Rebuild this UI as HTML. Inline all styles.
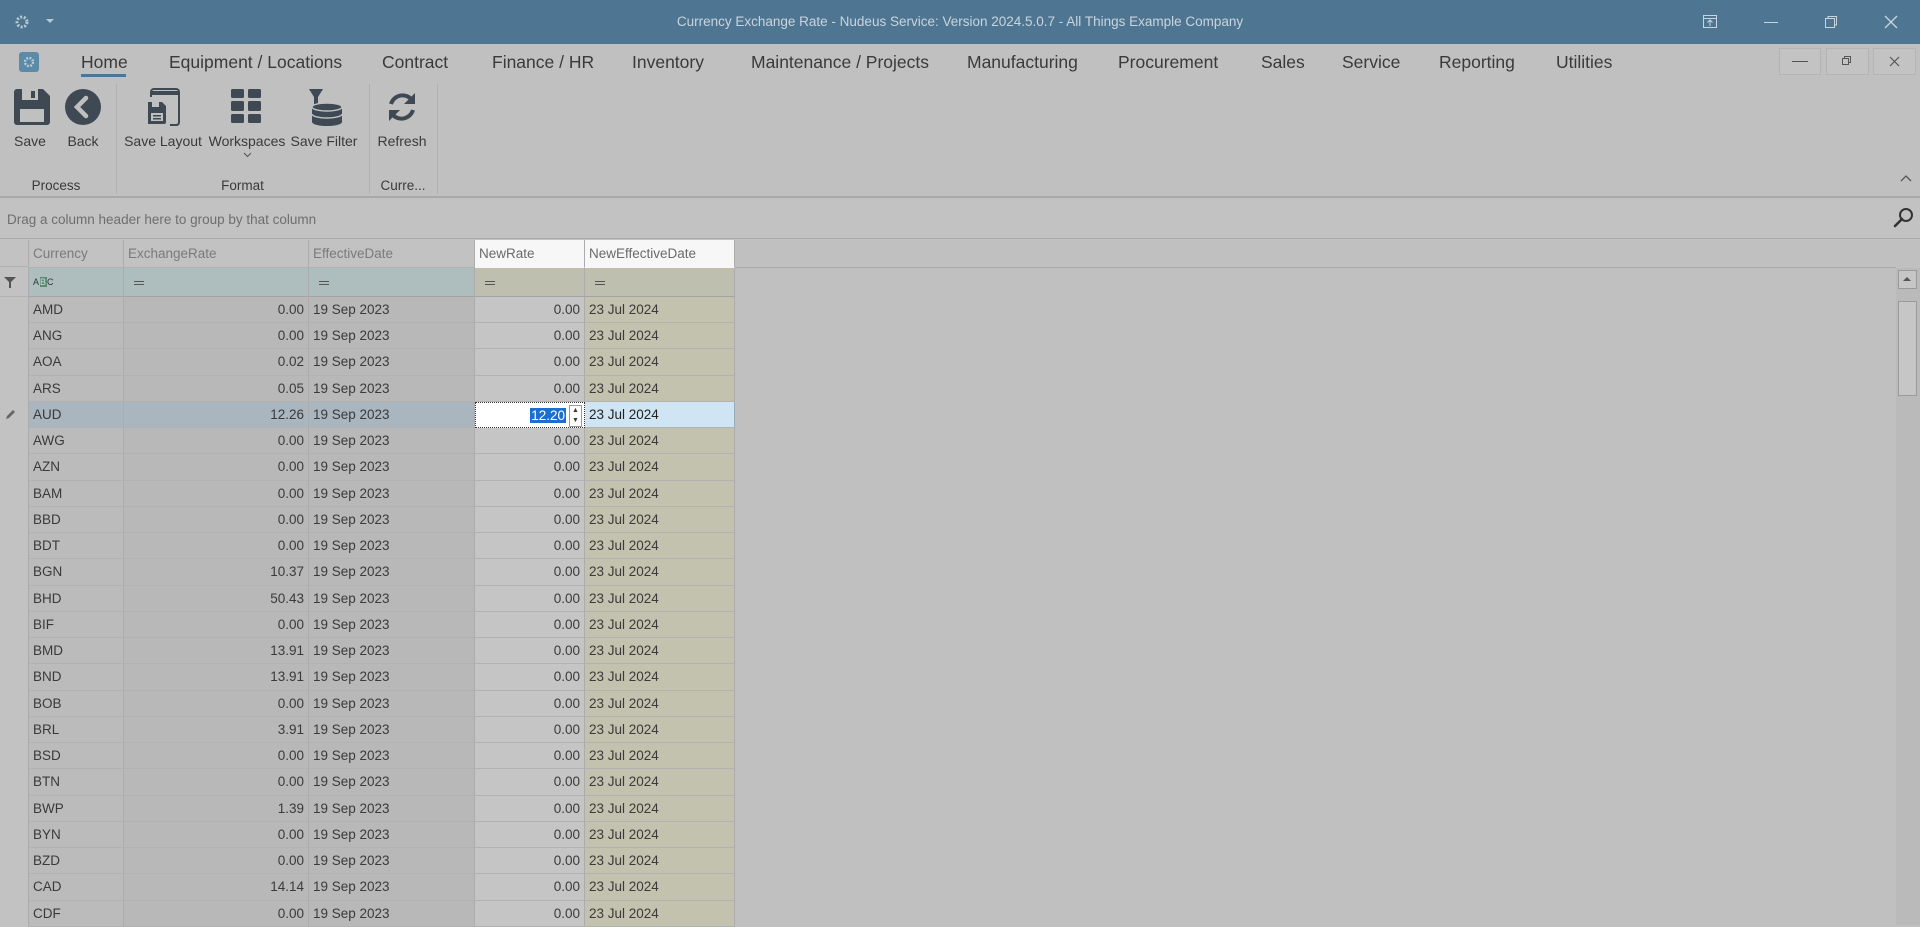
<!DOCTYPE html>
<html><head><meta charset="utf-8"><style>
*{margin:0;padding:0;box-sizing:border-box}
body{width:1920px;height:925px;overflow:hidden;background:#c0c0c0;font-family:"Liberation Sans",sans-serif;position:relative;color:#3a3a3a}
.a{position:absolute}
.title{left:0;top:0;width:1920px;height:44px;background:#4e7591}
.tt{left:0;width:1920px;top:14px;text-align:center;font-size:13.5px;color:#c9d5de}
.tab{top:52px;font-size:17.5px;color:#3a3a3a}
.rl{top:133px;font-size:14px;color:#3a3a3a;text-align:center}
.gl{top:178px;font-size:13.5px;color:#3a3a3a;text-align:center}
.sep{width:1px;background:#b0b0b0;top:84px;height:110px}
.cell{position:absolute;height:26.24px;border-right:1px solid #acacac;border-bottom:1px solid #b2b2b2;font-size:13.5px;line-height:25px;padding:0 4px;white-space:nowrap;overflow:hidden}
.r{text-align:right}
</style></head><body>
<div class="a title"></div>
<svg class="a" style="left:14px;top:14px" width="16" height="16" viewBox="0 0 16 16"><circle cx="8" cy="8" r="5" fill="none" stroke="#b8c8d4" stroke-width="3" stroke-dasharray="2 1.6"/><circle cx="8" cy="8" r="2" fill="#4e7591"/></svg>
<div class="a" style="left:46px;top:19px;border:4px solid transparent;border-top:4px solid #b8c8d4"></div>
<div class="a tt">Currency Exchange Rate - Nudeus Service: Version 2024.5.0.7 - All Things Example Company</div>
<svg class="a" style="left:1702px;top:14px" width="16" height="16"><rect x="1.5" y="1.5" width="13" height="12" fill="none" stroke="#c9d5de"/><line x1="1.5" y1="4.5" x2="14.5" y2="4.5" stroke="#c9d5de"/><path d="M8 12V6M5.5 8.5L8 6l2.5 2.5" fill="none" stroke="#c9d5de"/></svg>
<div class="a" style="left:1764px;top:22px;width:14px;height:1px;background:#c9d5de"></div>
<svg class="a" style="left:1824px;top:15px" width="14" height="14"><rect x="1.5" y="3.5" width="9" height="9" fill="none" stroke="#c9d5de"/><path d="M4 3.5V1.5h8.5V10h-2" fill="none" stroke="#c9d5de"/></svg>
<svg class="a" style="left:1884px;top:15px" width="14" height="14"><path d="M1 1L13 13M13 1L1 13" stroke="#c9d5de" stroke-width="1.3"/></svg>

<div class="a" style="left:19px;top:52px;width:20px;height:20px;background:#5d8aa6;border-radius:3px"></div>
<svg class="a" style="left:22px;top:55px" width="14" height="14"><circle cx="7" cy="7" r="4" fill="none" stroke="#bcd0dc" stroke-width="2.4" stroke-dasharray="1.8 1.4"/></svg>
<div class="a tab" style="left:81px">Home</div>
<div class="a" style="left:81px;top:74px;width:45px;height:3px;background:#4e7591"></div>
<div class="a tab" style="left:169px">Equipment / Locations</div>
<div class="a tab" style="left:382px">Contract</div>
<div class="a tab" style="left:492px">Finance / HR</div>
<div class="a tab" style="left:632px">Inventory</div>
<div class="a tab" style="left:751px">Maintenance / Projects</div>
<div class="a tab" style="left:967px">Manufacturing</div>
<div class="a tab" style="left:1118px">Procurement</div>
<div class="a tab" style="left:1261px">Sales</div>
<div class="a tab" style="left:1342px">Service</div>
<div class="a tab" style="left:1439px">Reporting</div>
<div class="a tab" style="left:1556px">Utilities</div>
<div class="a" style="left:1779px;top:48px;width:42px;height:27px;border:1px solid #b4b4b4;background:#c3c3c3"></div>
<div class="a" style="left:1792px;top:61px;width:16px;height:1px;background:#555"></div>
<div class="a" style="left:1826px;top:48px;width:43px;height:27px;border:1px solid #b4b4b4;background:#c3c3c3"></div>
<svg class="a" style="left:1841px;top:55px" width="12" height="12"><rect x="1.5" y="3.5" width="6" height="6" fill="none" stroke="#555"/><path d="M3.5 3.5V1.5h6v6h-2" fill="none" stroke="#555"/></svg>
<div class="a" style="left:1873px;top:48px;width:43px;height:27px;border:1px solid #b4b4b4;background:#c3c3c3"></div>
<svg class="a" style="left:1889px;top:56px" width="11" height="11"><path d="M1 1L10 10M10 1L1 10" stroke="#555" stroke-width="1.2"/></svg>

<svg class="a" style="left:12px;top:88px" width="40" height="38" viewBox="0 0 40 38"><path d="M2 4a3 3 0 0 1 3-3h26l7 7v26a3 3 0 0 1-3 3H5a3 3 0 0 1-3-3z" fill="#3f4954"/><rect x="10" y="1" width="16" height="11" fill="#c0c0c0"/><rect x="19" y="3" width="4" height="7" fill="#3f4954"/><rect x="8" y="21" width="24" height="13" fill="#c0c0c0"/></svg>
<svg class="a" style="left:64px;top:88px" width="38" height="38"><circle cx="19" cy="19" r="18" fill="#3f4954"/><path d="M22 10l-9 9 9 9" fill="none" stroke="#c0c0c0" stroke-width="4.5" stroke-linecap="round"/></svg>
<svg class="a" style="left:146px;top:88px" width="36" height="38"><path d="M5 9V4a3 3 0 0 1 3-3h22a3 3 0 0 1 3 3v31" fill="none" stroke="#3f4954" stroke-width="2"/><rect x="6" y="3" width="26" height="4" fill="#3f4954"/><path d="M33 35a3 3 0 0 1-3 2h-6" fill="none" stroke="#3f4954" stroke-width="2"/><path d="M2 14h14l4 4v16a2 2 0 0 1-2 2H2z" fill="#3f4954"/><rect x="6" y="14" width="7" height="5" fill="#c0c0c0"/><rect x="5" y="25" width="12" height="8" fill="#c0c0c0"/><rect x="7" y="27" width="8" height="1.5" fill="#3f4954"/><rect x="7" y="30" width="8" height="1.5" fill="#3f4954"/></svg>
<svg class="a" style="left:230px;top:88px" width="34" height="36"><g fill="#3f4954"><rect x="1" y="1" width="13" height="9" rx="1.5"/><rect x="18" y="1" width="13" height="9" rx="1.5"/><rect x="1" y="13" width="13" height="10" rx="1.5"/><rect x="18" y="13" width="13" height="10" rx="1.5"/><rect x="1" y="26" width="13" height="9" rx="1.5"/><rect x="18" y="26" width="13" height="9" rx="1.5"/></g></svg>
<svg class="a" style="left:306px;top:88px" width="38" height="38"><g fill="#3f4954"><path d="M3 1h14l-5 8v12h-4V9z"/><ellipse cx="21" cy="34" rx="15" ry="4"/><rect x="6" y="26" width="30" height="8"/><ellipse cx="21" cy="26" rx="15" ry="4" stroke="#c0c0c0" stroke-width="1.5"/><rect x="6" y="19" width="30" height="7"/><ellipse cx="21" cy="19" rx="15" ry="4" stroke="#c0c0c0" stroke-width="1.5"/></g></svg>
<svg class="a" style="left:384px;top:90px" width="36" height="34"><g fill="none" stroke="#3f4954" stroke-width="4"><path d="M7 14a12 12 0 0 1 21-4"/><path d="M29 20a12 12 0 0 1-21 4"/></g><path d="M31 3v11H20z" fill="#3f4954"/><path d="M5 31V20h11z" fill="#3f4954"/></svg>
<div class="a rl" style="left:0;width:60px">Save</div>
<div class="a rl" style="left:60px;width:46px">Back</div>
<div class="a rl" style="left:122px;width:82px">Save Layout</div>
<div class="a rl" style="left:208px;width:78px">Workspaces</div>
<svg class="a" style="left:243px;top:152px" width="9" height="6"><path d="M1 1l3.5 3.5L8 1" fill="none" stroke="#555"/></svg>
<div class="a rl" style="left:288px;width:72px">Save Filter</div>
<div class="a rl" style="left:372px;width:60px">Refresh</div>
<div class="a sep" style="left:116px"></div>
<div class="a sep" style="left:369px"></div>
<div class="a sep" style="left:437px"></div>
<div class="a gl" style="left:0;width:112px">Process</div>
<div class="a gl" style="left:116px;width:253px">Format</div>
<div class="a gl" style="left:369px;width:68px">Curre...</div>
<svg class="a" style="left:1900px;top:174px" width="12" height="8"><path d="M1 7l5-5 5 5" fill="none" stroke="#555" stroke-width="1.3"/></svg>
<div class="a" style="left:0;top:196px;width:1920px;height:2px;background:#a9a9a9"></div>
<div class="a" style="left:0;top:198px;width:1920px;height:41px;background:#c2c2c2;border-bottom:1px solid #a9a9a9"></div>
<div class="a" style="left:7px;top:212px;font-size:13.5px;color:#6e6e6e">Drag a column header here to group by that column</div>
<svg class="a" style="left:1893px;top:207px" width="22" height="22"><circle cx="13" cy="8" r="6" fill="none" stroke="#333" stroke-width="2"/><path d="M9 12L2 19" stroke="#333" stroke-width="2.6" stroke-linecap="round"/></svg>

<div id="g"></div>
<div class="a" style="left:1896px;top:268px;width:24px;height:657px;background:#bababa"></div>
<div class="a" style="left:1898px;top:270px;width:19px;height:19px;border:1px solid #9a9a9a;background:#c6c6c6"></div>
<div class="a" style="left:1903px;top:277px;border:4px solid transparent;border-bottom:4px solid #555;border-top:0"></div>
<div class="a" style="left:1898px;top:301px;width:19px;height:95px;border:1px solid #9a9a9a;background:#c6c6c6"></div>
<script>
var cols=[[0,29],[29,124],[124,309],[309,475],[475,585],[585,735]];
var g='';
function c(x,w,y,h,bg,txt,cls,st){g+='<div class="cell '+(cls||'')+'" style="left:'+x+'px;width:'+w+'px;top:'+y+'px;height:'+h+'px;background:'+bg+';'+(st||'')+'">'+(txt||'')+'</div>';}
c(0,29,240,27,'#c2c2c2');
var hn=['Currency','ExchangeRate','EffectiveDate','NewRate','NewEffectiveDate'];
for(var i=0;i<5;i++){var x=cols[i+1][0],w=cols[i+1][1]-x;var white=i>=3;c(x,w,240,28,white?'#f7f7f7':'#c2c2c2',hn[i],'', 'color:'+(white?'#6a6a6a':'#7a7a7a')+';line-height:28px;'+(white?'border-bottom:1px solid #f7f7f7':''));}
c(735,1161,240,28,'#c0c0c0','','','border:0;border-bottom:1px solid #aaa');
c(0,29,268,29,'#c2c2c2','<svg width="12" height="12" style="margin-top:8px"><path d="M0 1h12L7 6v6H5V6z" fill="#555"/></svg>');
var fb=['#aebebf','#aebebf','#aebebf','#bfbfaf','#bfbfaf'];
for(var i=0;i<5;i++){var x=cols[i+1][0],w=cols[i+1][1]-x;c(x,w,268,29,fb[i],i==0?'<span style="font-size:9px;letter-spacing:1px;color:#333;line-height:28px">A<span style="background:#5d8a6e;color:#cde">B</span>C</span>':'<span style="display:inline-block;width:10px;height:4px;border-top:1.5px solid #555;border-bottom:1.5px solid #555;margin:12px 0 0 6px"></span>','','border-bottom:1px solid #a4a4a4');}
var d=[['AMD','0.00'],['ANG','0.00'],['AOA','0.02'],['ARS','0.05'],['AUD','12.26'],['AWG','0.00'],['AZN','0.00'],['BAM','0.00'],['BBD','0.00'],['BDT','0.00'],['BGN','10.37'],['BHD','50.43'],['BIF','0.00'],['BMD','13.91'],['BND','13.91'],['BOB','0.00'],['BRL','3.91'],['BSD','0.00'],['BTN','0.00'],['BWP','1.39'],['BYN','0.00'],['BZD','0.00'],['CAD','14.14'],['CDF','0.00']];
for(var r=0;r<d.length;r++){var y=297+r*26.24,s=r==4;
c(0,29,y,26.24,'#c2c2c2',s?'<svg width="12" height="12" style="margin-top:7px"><path d="M2 10l1-3 6-6 2 2-6 6z" fill="#666"/></svg>':'','','border-right:1px solid #acacac;border-bottom:0');
c(29,95,y,26.24,s?'#a9b5bf':'#bbbbbb',d[r][0]);
c(124,185,y,26.24,s?'#a9b5bf':'#b8b8b8',d[r][1],'r');
c(309,166,y,26.24,s?'#a9b5bf':'#b8b8b8','19 Sep 2023');
if(s){c(475,110,y,26.24,'#fff','<span style="background:#1c6fd0;color:#fff;padding:0 1px">12.20</span><span style="display:inline-block;width:13px;height:22px;vertical-align:top;margin:2px 0 0 3px;border:1px solid #999;font-size:7px;line-height:10px;text-align:center">▲<br>▼</span>','r','border:1px dotted #333;padding-right:2px');
c(585,150,y,26.24,'#cfe5f4','23 Jul 2024','','color:#222;border-right:1px solid #9ab');}
else{c(475,110,y,26.24,'#c5c5c5','0.00','r');c(585,150,y,26.24,'#c3c2ae','23 Jul 2024');}}
document.getElementById('g').innerHTML=g;
</script>
</body></html>
